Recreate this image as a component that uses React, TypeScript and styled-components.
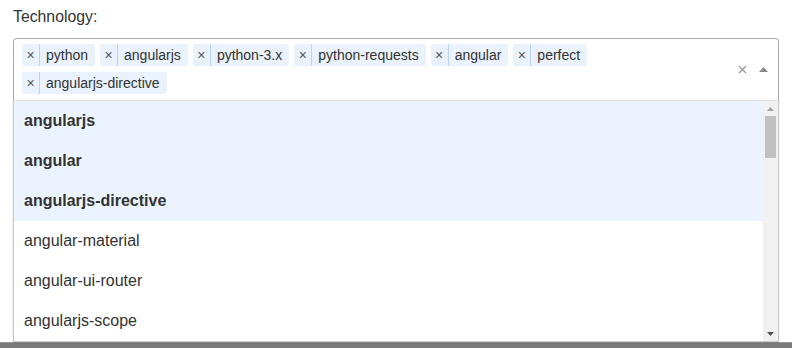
import React from "react";
import styled, { createGlobalStyle } from "styled-components";

const GlobalStyle = createGlobalStyle`
  html, body, #root {
    height: 100%;
  }
  body {
    margin: 0;
    font-family: "Liberation Sans", Arial, sans-serif;
    color: #333;
    background: #fff;
  }
`;

const Page = styled.div`
  height: 100%;
  display: flex;
  flex-direction: column;
  box-sizing: border-box;
  padding: 6px 13px 0;
`;

const Label = styled.label`
  display: block;
  font-size: 15.8px;
  line-height: 22px;
  margin-bottom: 10px;
`;

const SelectWrap = styled.div`
  position: relative;
`;

const Control = styled.div`
  display: flex;
  align-items: center;
  border: 1px solid #aaa;
  border-bottom-color: #e3e3e3;
  border-radius: 4px 4px 0 0;
  padding: 5px 0 6px 8px;
  background: #fff;
`;

const Chips = styled.ul`
  flex: 1;
  display: flex;
  flex-wrap: wrap;
  gap: 6px 5px;
  list-style: none;
  margin: 0;
  padding: 0 14px 0 0;
`;

const Chip = styled.li`
  display: flex;
  align-items: stretch;
  height: 22px;
  line-height: 22px;
  font-size: 14px;
  background: #eaf2fd;
  border-radius: 3px;
  color: #333;
`;

const ChipRemove = styled.span`
  width: 17px;
  text-align: center;
  border-right: 1px solid #b8d3f3;
  color: #555;
  font-size: 14px;
`;

const ChipText = styled.span`
  padding: 0 7px 0 6px;
`;

const Indicators = styled.div`
  display: flex;
  align-items: center;
  gap: 12px;
  padding: 0 10px 0 0;
`;

const Menu = styled.div`
  position: absolute;
  top: 100%;
  left: 0;
  right: 0;
  display: flex;
  height: 240px;
  border: 1px solid #c8c8c8;
  border-top: none;
  background: #fff;
  box-shadow: 0 1px 2px rgba(0, 0, 0, 0.15);
  z-index: 2;
`;

const Options = styled.ul`
  flex: 1;
  list-style: none;
  margin: 0;
  padding: 0;
  overflow: hidden;
`;

const Option = styled.li<{ $selected?: boolean }>`
  padding: 10px;
  font-size: 16px;
  line-height: 20px;
  color: #333;
  font-weight: ${(p) => (p.$selected ? 700 : 400)};
  background: ${(p) => (p.$selected ? "#ebf3fe" : "#fff")};
`;

const Scrollbar = styled.div`
  width: 15px;
  display: flex;
  flex-direction: column;
  background: #f1f1f1;
`;

const ScrollButton = styled.div`
  height: 15px;
  display: flex;
  align-items: center;
  justify-content: center;
`;

const ScrollTrack = styled.div`
  flex: 1;
  padding: 0 2px;
`;

const ScrollThumb = styled.div`
  height: 42px;
  background: #c1c1c1;
`;

const Footer = styled.div`
  margin: auto -13px 0;
  height: 5px;
  background: #7a7a7a;
  border-top: 1px solid #9a9a9a;
`;

const ClearIcon = () => (
  <svg width="9" height="9" viewBox="0 0 9 9">
    <path d="M1 1 L8 8 M8 1 L1 8" stroke="#999" strokeWidth="1.3" />
  </svg>
);

const ArrowUp = () => (
  <svg width="9" height="5" viewBox="0 0 9 5">
    <path d="M0 5 L4.5 0 L9 5 Z" fill="#888" />
  </svg>
);

const Tri = ({ up, color }: { up?: boolean; color: string }) => (
  <svg width="7" height="4" viewBox="0 0 7 4">
    <path d={up ? "M0 4 L3.5 0 L7 4 Z" : "M0 0 L3.5 4 L7 0 Z"} fill={color} />
  </svg>
);

const selected = [
  "python",
  "angularjs",
  "python-3.x",
  "python-requests",
  "angular",
  "perfect",
  "angularjs-directive",
];

const options = [
  "angularjs",
  "angular",
  "angularjs-directive",
  "angular-material",
  "angular-ui-router",
  "angularjs-scope",
];

const App = () => {
  return (
    <Page>
      <GlobalStyle />
      <Label>Technology:</Label>
      <SelectWrap>
        <Control>
          <Chips>
            {selected.map((tag) => (
              <Chip key={tag}>
                <ChipRemove>×</ChipRemove>
                <ChipText>{tag}</ChipText>
              </Chip>
            ))}
          </Chips>
          <Indicators>
            <ClearIcon />
            <ArrowUp />
          </Indicators>
        </Control>
        <Menu>
          <Options>
            {options.map((o) => (
              <Option key={o} $selected={selected.includes(o)}>
                {o}
              </Option>
            ))}
          </Options>
          <Scrollbar>
            <ScrollButton>
              <Tri up color="#a3a3a3" />
            </ScrollButton>
            <ScrollTrack>
              <ScrollThumb />
            </ScrollTrack>
            <ScrollButton>
              <Tri color="#505050" />
            </ScrollButton>
          </Scrollbar>
        </Menu>
      </SelectWrap>
      <Footer />
    </Page>
  );
};

export default App;
